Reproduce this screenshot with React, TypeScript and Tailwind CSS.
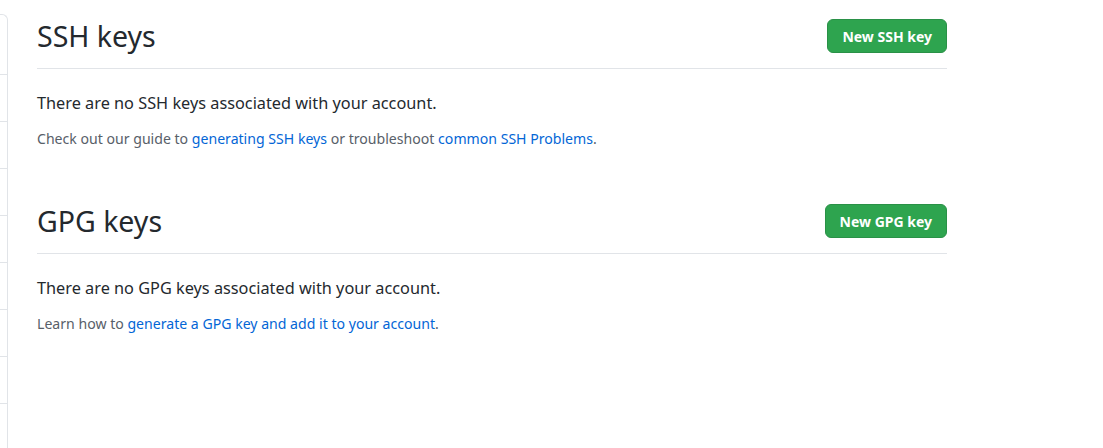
import React from 'react';

const font = { fontFamily: '"Noto Sans", "Liberation Sans", sans-serif' };

interface SectionProps {
  title: string;
  button: string;
  empty: string;
  children: React.ReactNode;
  className?: string;
}

const KeySection: React.FC<SectionProps> = ({ title, button, empty, children, className }) => (
  <section className={className}>
    <div className="flex items-center justify-between pb-[15px] border-b border-[#e1e4e8]">
      <h2 className="text-[28.5px] leading-[34px] font-normal text-[#24292e]">{title}</h2>
      <button className="h-[34px] px-[14px] rounded-[6px] bg-[#2ea44f] border border-[#2a9147] text-white text-[14px] font-bold">
        {button}
      </button>
    </div>
    <p className="mt-[22px] text-[16.3px] leading-[24px] text-[#24292e]">{empty}</p>
    <p className="mt-[13px] text-[14.1px] leading-[21px] text-[#586069]">{children}</p>
  </section>
);

export default function App() {
  const rows = Array.from({ length: 8 }, (_, i) => i);

  return (
    <div className="flex w-[1103px] h-[448px] bg-white overflow-hidden" style={font}>
      {/* sidebar edge */}
      <div className="w-[8px] mt-[14px] border-t border-r border-[#e1e4e8] rounded-tr-[6px] shrink-0">
        <div className="h-[60px] border-b border-[#e1e4e8]" />
        {rows.map((r) => (
          <div key={r} className="h-[47px] border-b border-[#e1e4e8]" />
        ))}
      </div>

      <main className="ml-[29px] w-[910px] pt-[19px]">
        <KeySection title="SSH keys" button="New SSH key" empty="There are no SSH keys associated with your account.">
          Check out our guide to{' '}
          <a href="#" className="text-[#0366d6]">generating SSH keys</a> or troubleshoot{' '}
          <a href="#" className="text-[#0366d6]">common SSH Problems</a>.
        </KeySection>

        <KeySection
          className="mt-[55px]"
          title="GPG keys"
          button="New GPG key"
          empty="There are no GPG keys associated with your account."
        >
          Learn how to{' '}
          <a href="#" className="text-[#0366d6]">generate a GPG key and add it to your account</a>.
        </KeySection>
      </main>
    </div>
  );
}
